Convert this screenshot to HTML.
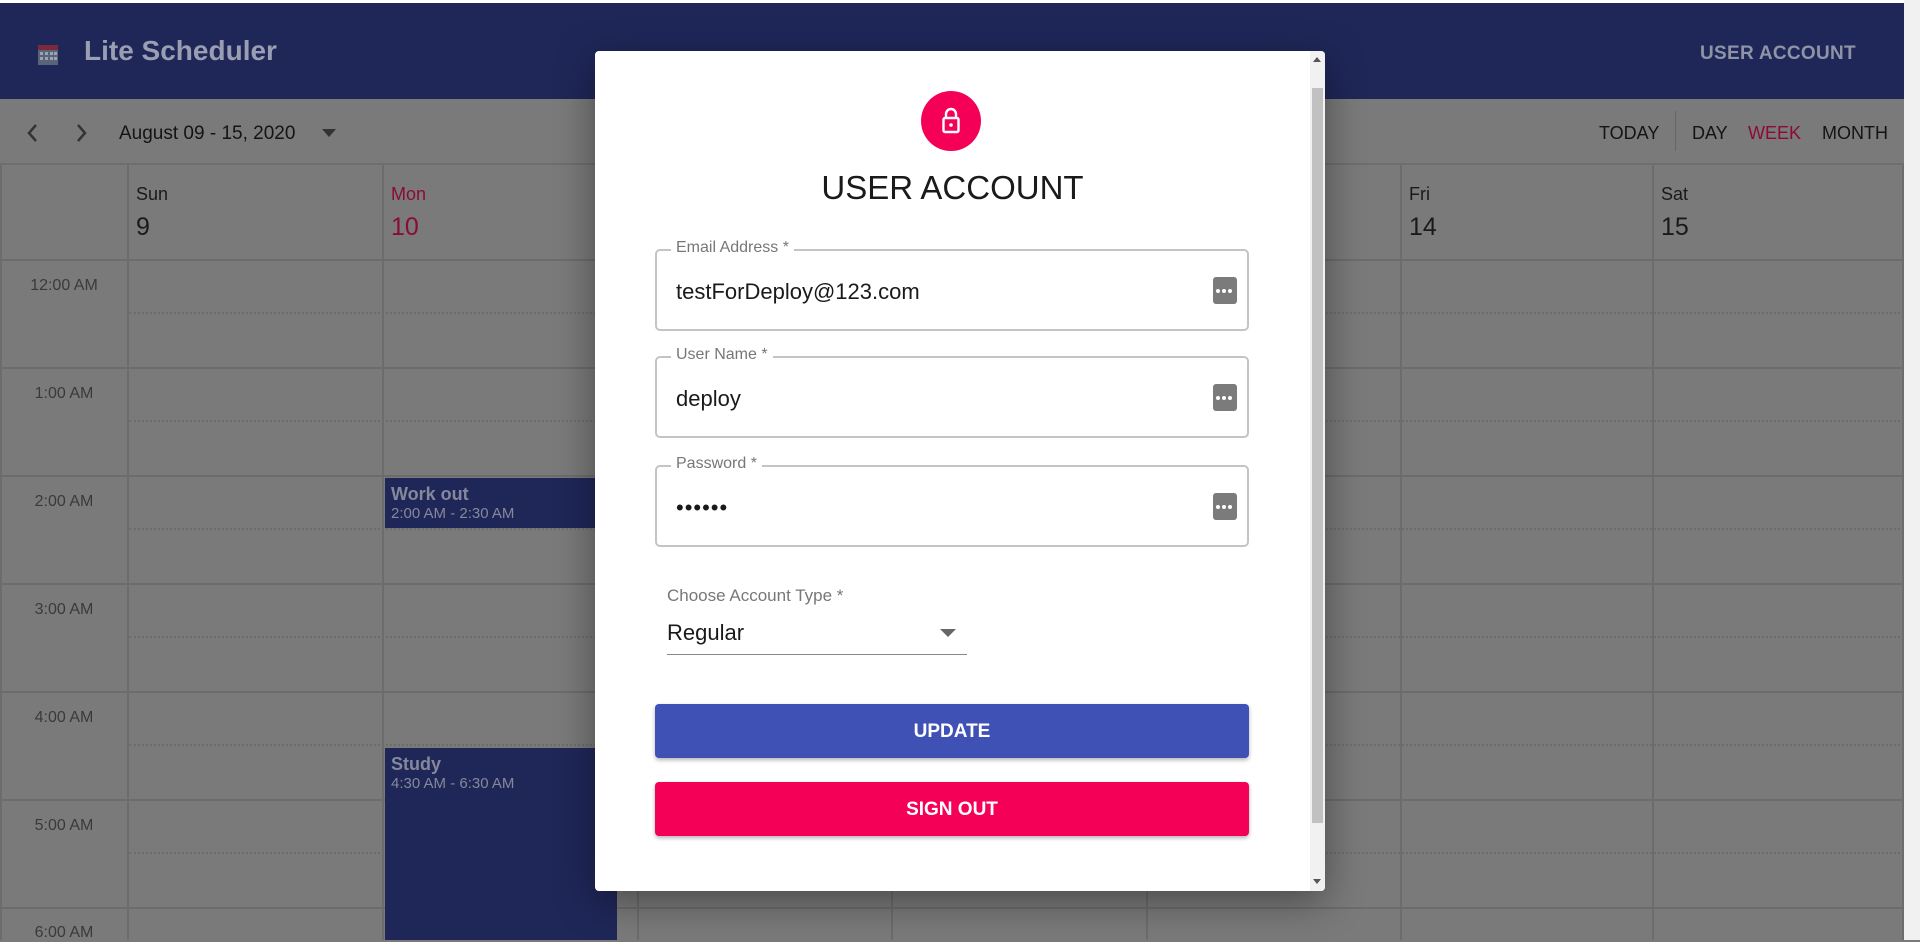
<!DOCTYPE html>
<html><head><meta charset="utf-8"><style>
*{box-sizing:border-box;margin:0;padding:0}
body{width:1920px;height:940px;overflow:hidden;background:#7a7a7a;font-family:"Liberation Sans",Roboto,sans-serif;position:relative}
.a{position:absolute}
.hdr{left:0;top:3px;width:1904px;height:96px;background:#1f2759}
.tb{left:0;top:99px;width:1904px;height:66px;background:#7a7a7a;border-bottom:2px solid #6e6e6e}
.vl{position:absolute;width:2px;background:#6c6c6c}
.hl{position:absolute;height:2px;background:#6c6c6c}
.dl{position:absolute;height:0;border-top:2px dotted #6c6c6c}
.tm{position:absolute;width:128px;text-align:center;font-size:16px;color:#3a3a3a}
.dn{position:absolute;font-size:18px;color:#1a1a1a}
.dd{position:absolute;font-size:25px;color:#1a1a1a}
.ev{position:absolute;background:#1f2759;color:#85889a;padding:6px 6px}
.ev b{display:block;font-size:18px}
.ev span{font-size:15px}
.modal{left:595px;top:51px;width:730px;height:840px;background:#fff;border-radius:4px;box-shadow:0 10px 40px rgba(0,0,0,.4);overflow:hidden}
.fld{position:absolute;left:60px;width:594px;height:82px;border:2px solid #c4c4c4;border-radius:5px}
.lbl{position:absolute;left:14px;top:-12px;background:#fff;padding:0 5px;font-size:16px;color:#777}
.val{position:absolute;left:19px;top:28px;font-size:22px;color:#1a1a1a}
.ic{position:absolute;right:10px;top:26px;width:24px;height:27px;background:#7b7b7b;border-radius:3px}
.ic i{position:absolute;top:12px;width:4px;height:4px;border-radius:50%;background:#fff}
.btn{position:absolute;left:60px;width:594px;height:54px;border-radius:4px;color:#fff;font-weight:bold;font-size:19px;text-align:center;line-height:56px;box-shadow:0 2px 4px rgba(0,0,0,.3)}
</style></head><body>
<div class="a" style="left:0;top:0;width:1920px;height:3px;background:#fff"></div>
<div class="a hdr">
 <svg class="a" style="left:37px;top:39px" width="22" height="24" viewBox="0 0 22 24"><rect x="1" y="3" width="20" height="20" fill="#5a6478"/><rect x="1" y="3" width="20" height="5" fill="#7a2a3a"/><g fill="#9aa3b5"><rect x="3" y="10" width="3" height="3"/><rect x="8" y="10" width="3" height="3"/><rect x="13" y="10" width="3" height="3"/><rect x="3" y="15" width="3" height="3"/><rect x="8" y="15" width="3" height="3"/><rect x="13" y="15" width="3" height="3"/><rect x="17" y="10" width="3" height="3"/><rect x="17" y="15" width="3" height="3"/></g></svg>
 <div class="a" style="left:84px;top:32px;font-size:28px;font-weight:bold;color:#9a9eb2">Lite Scheduler</div>
 <div class="a" style="left:1700px;top:40px;font-size:19px;font-weight:bold;color:#8f93a6;letter-spacing:0.3px">USER ACCOUNT</div>
</div>
<div class="a" style="left:1904px;top:0;width:16px;height:940px;background:#f1f1f1"></div>
<div class="a tb">
 <svg class="a" style="left:22px;top:22px" width="80" height="24" viewBox="0 0 80 24"><path d="M14 4 L7 12 L14 20" stroke="#333" stroke-width="2.5" fill="none"/><path d="M56 4 L63 12 L56 20" stroke="#333" stroke-width="2.5" fill="none"/></svg>
 <div class="a" style="left:119px;top:24px;font-size:19px;color:#141414">August 09 - 15, 2020</div>
 <svg class="a" style="left:322px;top:30px" width="14" height="8"><path d="M0 0H14L7 8Z" fill="#333"/></svg>
 <div class="a" style="left:1599px;top:24px;font-size:18px;color:#141414">TODAY</div>
 <div class="a" style="left:1675px;top:12px;width:1px;height:40px;background:#666"></div>
 <div class="a" style="left:1692px;top:24px;font-size:18px;color:#141414">DAY</div>
 <div class="a" style="left:1748px;top:24px;font-size:18px;color:#8a0c36">WEEK</div>
 <div class="a" style="left:1822px;top:24px;font-size:18px;color:#141414">MONTH</div>
</div>
<div class="vl" style="left:0;top:165px;height:775px"></div>
<div class="vl" style="left:127px;top:165px;height:775px"></div>
<div class="vl" style="left:382px;top:165px;height:775px"></div>
<div class="vl" style="left:637px;top:165px;height:775px"></div>
<div class="vl" style="left:891px;top:165px;height:775px"></div>
<div class="vl" style="left:1146px;top:165px;height:775px"></div>
<div class="vl" style="left:1400px;top:165px;height:775px"></div>
<div class="vl" style="left:1652px;top:165px;height:775px"></div>
<div class="vl" style="left:1902px;top:165px;height:775px"></div>
<div class="hl" style="left:0;top:259px;width:1904px"></div>
<div class="hl" style="left:0;top:367px;width:1904px"></div>
<div class="hl" style="left:0;top:475px;width:1904px"></div>
<div class="hl" style="left:0;top:583px;width:1904px"></div>
<div class="hl" style="left:0;top:691px;width:1904px"></div>
<div class="hl" style="left:0;top:799px;width:1904px"></div>
<div class="hl" style="left:0;top:907px;width:1904px"></div>
<div class="dl" style="left:129px;top:312px;width:1775px"></div>
<div class="dl" style="left:129px;top:420px;width:1775px"></div>
<div class="dl" style="left:129px;top:528px;width:1775px"></div>
<div class="dl" style="left:129px;top:636px;width:1775px"></div>
<div class="dl" style="left:129px;top:744px;width:1775px"></div>
<div class="dl" style="left:129px;top:852px;width:1775px"></div>
<div class="tm" style="left:0;top:277px">12:00 AM</div>
<div class="tm" style="left:0;top:385px">1:00 AM</div>
<div class="tm" style="left:0;top:493px">2:00 AM</div>
<div class="tm" style="left:0;top:601px">3:00 AM</div>
<div class="tm" style="left:0;top:709px">4:00 AM</div>
<div class="tm" style="left:0;top:817px">5:00 AM</div>
<div class="tm" style="left:0;top:924px">6:00 AM</div>
<div class="dn" style="left:136px;top:184px">Sun</div><div class="dd" style="left:136px;top:213px">9</div>
<div class="dn" style="left:391px;top:184px;color:#8a0c36">Mon</div><div class="dd" style="left:391px;top:213px;color:#8a0c36">10</div>
<div class="dn" style="left:1409px;top:184px">Fri</div><div class="dd" style="left:1409px;top:213px">14</div>
<div class="dn" style="left:1661px;top:184px">Sat</div><div class="dd" style="left:1661px;top:213px">15</div>
<div class="ev" style="left:385px;top:478px;width:232px;height:50px"><b>Work out</b><span>2:00 AM - 2:30 AM</span></div>
<div class="ev" style="left:385px;top:748px;width:232px;height:192px"><b>Study</b><span>4:30 AM - 6:30 AM</span></div>
<div class="a modal">
 <div class="a" style="right:0;top:0;width:15px;height:840px;background:#f1f1f1"></div>
 <div class="a" style="right:2px;top:37px;width:11px;height:735px;background:#c1c1c1"></div>
 <svg class="a" style="right:4px;top:6px" width="8" height="6"><path d="M0 5H8L4 0Z" fill="#555"/></svg>
 <svg class="a" style="right:4px;bottom:6px" width="8" height="6"><path d="M0 0H8L4 5Z" fill="#555"/></svg>
 <div class="a" style="left:326px;top:40px;width:60px;height:60px;border-radius:50%;background:#f50057"></div>
 <svg class="a" style="left:344px;top:54px" width="24" height="30" viewBox="0 0 24 30"><path d="M7 13V9a5 5 0 0 1 10 0v4" stroke="#fff" stroke-width="2.4" fill="none"/><rect x="4.5" y="13" width="15" height="14" rx="1.5" stroke="#fff" stroke-width="2.4" fill="none"/><circle cx="12" cy="20" r="1.8" fill="#fff"/></svg>
 <div class="a" style="left:0;width:715px;top:118px;text-align:center;font-size:33px;color:#1a1a1a">USER ACCOUNT</div>
 <div class="fld" style="top:198px"><div class="lbl">Email Address *</div><div class="val">testForDeploy@123.com</div><div class="ic"><i style="left:3px"></i><i style="left:9px"></i><i style="left:15px"></i></div></div>
 <div class="fld" style="top:305px"><div class="lbl">User Name *</div><div class="val">deploy</div><div class="ic"><i style="left:3px"></i><i style="left:9px"></i><i style="left:15px"></i></div></div>
 <div class="fld" style="top:414px"><div class="lbl">Password *</div><div class="val" style="letter-spacing:1px">••••••</div><div class="ic"><i style="left:3px"></i><i style="left:9px"></i><i style="left:15px"></i></div></div>
 <div class="a" style="left:72px;top:535px;font-size:17px;color:#777">Choose Account Type *</div>
 <div class="a" style="left:72px;top:569px;font-size:22px;color:#1a1a1a">Regular</div>
 <svg class="a" style="left:345px;top:578px" width="16" height="8"><path d="M0 0H16L8 8Z" fill="#666"/></svg>
 <div class="a" style="left:72px;top:603px;width:300px;height:1px;background:#888"></div>
 <div class="btn" style="top:653px;background:#3f51b5">UPDATE</div>
 <div class="btn" style="top:731px;background:#f50057">SIGN OUT</div>
</div>
</body></html>
